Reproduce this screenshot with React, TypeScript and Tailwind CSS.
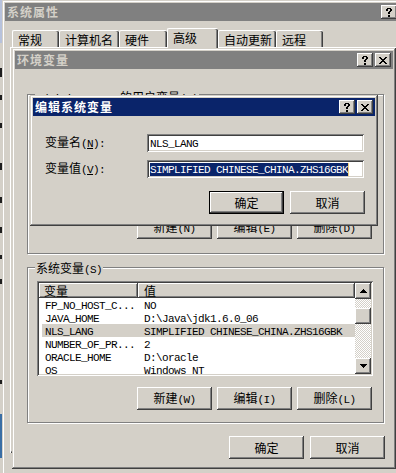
import React from "react";

const RAISED =
  "shadow-[inset_-1px_-1px_#404040,inset_1px_1px_#ffffff,inset_-2px_-2px_#808080,inset_2px_2px_#d4d0c8]";
const FRAME =
  "shadow-[inset_-1px_-1px_#404040,inset_1px_1px_#d4d0c8,inset_-2px_-2px_#808080,inset_2px_2px_#ffffff]";
const SUNKEN =
  "shadow-[inset_1px_1px_#808080,inset_-1px_-1px_#ffffff,inset_2px_2px_#404040,inset_-2px_-2px_#d4d0c8]";
const ETCHED = "border border-[#808080] shadow-[inset_1px_1px_#ffffff,1px_1px_#ffffff]";
const CHECKER =
  "bg-[image:repeating-conic-gradient(#d4d0c8_0%_25%,#ffffff_0%_50%)] bg-[length:2px_2px]";

const ASCII = "font-['Liberation_Mono',monospace] text-[11px] tracking-[-0.6px]";
const CJK = "font-['Noto_Sans_CJK_SC',sans-serif] text-[12px]";

function T({ s }: { s: string }) {
  const parts = s.match(/[\x00-\x7f]+|[^\x00-\x7f]+/g) ?? [];
  return (
    <span className="whitespace-pre leading-[13px]">
      {parts.map((p, i) =>
        /^[\x00-\x7f]/.test(p) ? (
          <span key={i} className={ASCII}>
            {p}
          </span>
        ) : (
          <span key={i} className={CJK}>
            {p}
          </span>
        )
      )}
    </span>
  );
}

function Pix({ rows, color = "#000000" }: { rows: string[]; color?: string }) {
  const w = rows[0].length;
  const h = rows.length;
  return (
    <svg width={w} height={h} viewBox={`0 0 ${w} ${h}`} shapeRendering="crispEdges" className="block">
      {rows.flatMap((r, y) =>
        r.split("").map((c, x) =>
          c === "#" ? <rect key={`${x}-${y}`} x={x} y={y} width={1} height={1} fill={color} /> : null
        )
      )}
    </svg>
  );
}

const X_ROWS = ["##....##", ".##..##.", "..####..", "...##...", "..####..", ".##..##.", "##....##"];
const HELP_ROWS = [
  ".####.",
  "##..##",
  "##..##",
  "...##.",
  "..##..",
  "..##..",
  "......",
  "..##..",
  "..##..",
];
const UP_ROWS = ["...#...", "..###..", ".#####.", "#######"];
const DOWN_ROWS = ["#######", ".#####.", "..###..", "...#..."];

function CapBtn({ kind }: { kind: "help" | "close" }) {
  return (
    <div className={`w-[16px] h-[14px] bg-[#d4d0c8] ${RAISED} flex items-center justify-center`}>
      {kind === "help" ? <Pix rows={HELP_ROWS} /> : <Pix rows={X_ROWS} />}
    </div>
  );
}

function TitleBar({ title, active }: { title: string; active?: boolean }) {
  return (
    <div
      className={`h-[18px] shrink-0 flex items-center justify-between ${
        active ? "bg-[#0a246a] text-white" : "bg-[#808080] text-[#d4d0c8]"
      }`}
    >
      <span className="pl-[2px] font-['Noto_Sans_CJK_SC',sans-serif] text-[12px] font-bold tracking-[1px] leading-[12px]">
        {title}
      </span>
      <div className="flex gap-[2px] pr-[2px]">
        <CapBtn kind="help" />
        <CapBtn kind="close" />
      </div>
    </div>
  );
}

function Btn({ label, def }: { label: string; def?: boolean }) {
  if (def) {
    return (
      <div className="w-[75px] h-[23px] border border-black shrink-0">
        <div className={`w-full h-full bg-[#d4d0c8] ${RAISED} flex items-center justify-center text-black`}>
          <T s={label} />
        </div>
      </div>
    );
  }
  return (
    <div
      className={`w-[75px] h-[23px] shrink-0 bg-[#d4d0c8] ${RAISED} flex items-center justify-center text-black`}
    >
      <T s={label} />
    </div>
  );
}

function Desktop() {
  const segs: [number, string][] = [
    [43, "#b7c2dc"],
    [25, "#d4d0c8"],
    [9, "#1e1e1e"],
    [18, "#d4d0c8"],
    [5, "#1e1e1e"],
    [23, "#d4d0c8"],
    [5, "#1e1e1e"],
    [35, "#d4d0c8"],
    [7, "#1e1e1e"],
    [27, "#d4d0c8"],
    [6, "#1e1e1e"],
    [24, "#d4d0c8"],
    [6, "#1e1e1e"],
    [22, "#d4d0c8"],
    [4, "#1e1e1e"],
    [20, "#d4d0c8"],
    [5, "#1e1e1e"],
    [96, "#d4d0c8"],
    [4, "#1e1e1e"],
    [30, "#d4d0c8"],
    [44, "#3a6ea5"],
    [20, "#d4d0c8"],
  ];
  return (
    <div className="absolute left-0 top-0 w-[2px] h-[473px] flex flex-col overflow-hidden">
      {segs.map(([h, c], i) => (
        <div key={i} className="w-full shrink-0" style={{ height: h, background: c }} />
      ))}
    </div>
  );
}

const TABS = [
  { label: "常规", w: "w-[47px]" },
  { label: "计算机名", w: "w-[60px]" },
  { label: "硬件", w: "w-[48px]" },
  { label: "高级", w: "w-[51px]", sel: true },
  { label: "自动更新", w: "w-[58px]" },
  { label: "远程", w: "w-[47px]" },
];

function SysWindow() {
  return (
    <div className={`absolute left-[2px] top-0 w-[418px] h-[500px] bg-[#d4d0c8] ${FRAME} p-[3px] flex flex-col`}>
      <TitleBar title="系统属性" />
      <div className="pl-[5px] pt-[7px] flex flex-col">
        <div className="relative z-10 flex items-end h-[19px] pl-[2px]">
          {TABS.map((t) => (
            <div
              key={t.label}
              className={`${t.w} ${
                t.sel ? "h-[20px] -mb-[1px] pb-[3px]" : "h-[17px]"
              } shrink-0 bg-[#d4d0c8] border-t border-l border-white rounded-tl-[2px] rounded-tr-[2px] shadow-[inset_-1px_0_#404040,inset_-2px_0_#808080] flex items-center pl-[5px] text-black`}
            >
              <T s={t.label} />
            </div>
          ))}
        </div>
        <div className="w-[420px] h-[406px] shadow-[inset_1px_1px_#ffffff,inset_-1px_-1px_#404040,inset_-2px_-2px_#808080]" />
      </div>
    </div>
  );
}

const ROWS = [
  { n: "FP_NO_HOST_C...", v: "NO" },
  { n: "JAVA_HOME", v: "D:\\Java\\jdk1.6.0_06" },
  { n: "NLS_LANG", v: "SIMPLIFIED CHINESE_CHINA.ZHS16GBK", sel: true },
  { n: "NUMBER_OF_PR...", v: "2" },
  { n: "ORACLE_HOME", v: "D:\\oracle" },
  { n: "OS", v: "Windows NT" },
];

function ListView() {
  return (
    <div className={`ml-[9px] mt-[13px] w-[336px] h-[95px] bg-white ${SUNKEN} p-[2px] flex`}>
      <div className="flex-1 flex flex-col overflow-hidden">
        <div className="flex h-[15px] shrink-0">
          <div className={`w-[99px] h-full bg-[#d4d0c8] ${RAISED} flex items-center pl-[5px] text-black`}>
            <T s="变量" />
          </div>
          <div className={`flex-1 h-full bg-[#d4d0c8] ${RAISED} flex items-center pl-[6px] text-black`}>
            <T s="值" />
          </div>
        </div>
        {ROWS.map((r) => (
          <div
            key={r.n}
            className={`ml-[3px] h-[13px] shrink-0 flex items-center text-black ${r.sel ? "bg-[#d4d0c8]" : ""}`}
          >
            <div className="w-[96px] h-full pl-[3px] flex items-center">
              <T s={r.n} />
            </div>
            <div className="h-full pl-[6px] flex items-center">
              <T s={r.v} />
            </div>
          </div>
        ))}
      </div>
      <div className="w-[16px] h-full flex flex-col">
        <div className={`h-[16px] shrink-0 bg-[#d4d0c8] ${RAISED} flex items-center justify-center`}>
          <Pix rows={UP_ROWS} />
        </div>
        <div className={`h-[9px] shrink-0 ${CHECKER}`} />
        <div className={`h-[16px] shrink-0 bg-[#d4d0c8] ${RAISED}`} />
        <div className={`flex-1 ${CHECKER}`} />
        <div className={`h-[16px] shrink-0 bg-[#d4d0c8] ${RAISED} flex items-center justify-center`}>
          <Pix rows={DOWN_ROWS} />
        </div>
      </div>
    </div>
  );
}

function EnvWindow() {
  return (
    <div className={`absolute left-[12px] top-[48px] w-[384px] h-[421px] bg-[#d4d0c8] ${FRAME} p-[3px] flex flex-col`}>
      <TitleBar title="环境变量" />
      <div className="flex flex-col pl-[12px]">
        <div className={`relative mt-[25px] w-[357px] h-[160px] ${ETCHED} flex flex-col`}>
          <span className="absolute left-[7px] -top-[5px] bg-[#d4d0c8] px-[1px] text-black flex">
            <T s="Administrator 的用户变量(U)" />
          </span>
          <div className="h-[121px] shrink-0" />
          <div className="flex justify-end gap-[5px] pr-[11px]">
            <Btn label="新建(N)" />
            <Btn label="编辑(E)" />
            <Btn label="删除(D)" />
          </div>
        </div>
        <div className={`relative mt-[13px] w-[357px] h-[156px] ${ETCHED} flex flex-col`}>
          <span className="absolute left-[7px] -top-[7px] bg-[#d4d0c8] px-[1px] text-black flex">
            <T s="系统变量(S)" />
          </span>
          <ListView />
          <div className="mt-[11px] flex justify-end gap-[5px] pr-[11px]">
            <Btn label="新建(W)" />
            <Btn label="编辑(I)" />
            <Btn label="删除(L)" />
          </div>
        </div>
        <div className="mt-[13px] flex justify-end gap-[6px] pr-[8px]">
          <Btn label="确定" />
          <Btn label="取消" />
        </div>
      </div>
    </div>
  );
}

function EditDialog() {
  return (
    <div className={`absolute left-[30px] top-[95px] w-[348px] h-[131px] bg-[#d4d0c8] ${FRAME} p-[3px] flex flex-col`}>
      <TitleBar title="编辑系统变量" active />
      <div className="flex flex-col pl-[12px] pt-[18px] text-black">
        <div className="flex items-center h-[18px]">
          <div className="w-[102px] flex items-center whitespace-pre">
            <span className="leading-[13px]">
              <span className={CJK}>变量名</span>
              <span className={ASCII}>
                (<span className="underline underline-offset-[1px]">N</span>):
              </span>
            </span>
          </div>
          <div className={`w-[217px] h-[18px] bg-white ${SUNKEN} flex items-center pl-[3px]`}>
            <T s="NLS_LANG" />
          </div>
        </div>
        <div className="flex items-center h-[18px] mt-[8px]">
          <div className="w-[102px] flex items-center whitespace-pre">
            <span className="leading-[13px]">
              <span className={CJK}>变量值</span>
              <span className={ASCII}>
                (<span className="underline underline-offset-[1px]">V</span>):
              </span>
            </span>
          </div>
          <div className={`w-[217px] h-[18px] bg-white ${SUNKEN} flex items-center pl-[3px]`}>
            <div className="h-[13px] bg-[#0a246a] text-white flex items-center">
              <T s="SIMPLIFIED CHINESE_CHINA.ZHS16GBK" />
            </div>
            <div className="w-[1px] h-[13px] bg-[#f0d080]" />
          </div>
        </div>
        <div className="mt-[13px] flex justify-end gap-[6px] pr-[10px]">
          <Btn label="确定" def />
          <Btn label="取消" />
        </div>
      </div>
    </div>
  );
}

export default function App() {
  return (
    <div className="relative w-[396px] h-[473px] overflow-hidden bg-[#d4d0c8] select-none text-[12px] leading-[13px] font-['Noto_Sans_CJK_SC',sans-serif]">
      <Desktop />
      <SysWindow />
      <EnvWindow />
      <EditDialog />
    </div>
  );
}
